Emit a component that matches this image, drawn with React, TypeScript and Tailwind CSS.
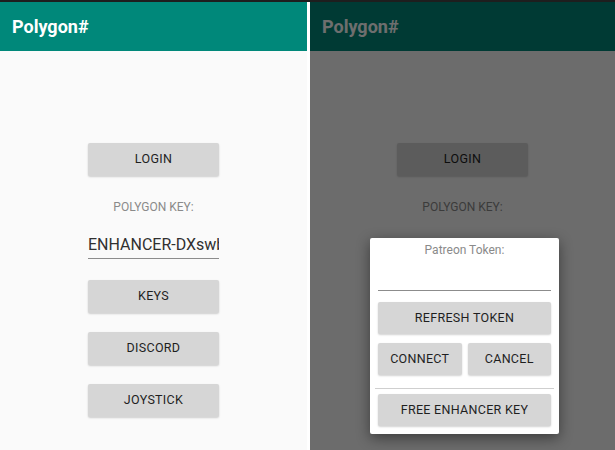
import React from "react";

const font = { fontFamily: "Roboto, 'Noto Sans', sans-serif" };

function Btn({ label, className = "" }: { label: string; className?: string }) {
  return (
    <div
      className={
        "flex items-center justify-center bg-[#d6d6d6] rounded-[2px] shadow-[0_1px_2px_rgba(0,0,0,0.18)] text-[12.5px] font-normal text-[#1f1f1f] tracking-[0.3px] " +
        className
      }
    >
      {label}
    </div>
  );
}

function Screen() {
  return (
    <div className="flex flex-col h-full w-full bg-[#fafafa]">
      <div className="h-[49px] bg-[#00887a] flex items-center pl-[12px] shrink-0">
        <span className="text-white text-[18px] font-bold leading-none">Polygon#</span>
      </div>
      <div className="flex flex-col items-center pt-[92px]">
        <Btn label="LOGIN" className="w-[131px] h-[33px]" />
        <div className="mt-[24px] text-[12px] leading-[14px] text-[#8a8a8a]">POLYGON KEY:</div>
        <div className="mt-[21px] w-[131px] h-[24px] overflow-hidden whitespace-nowrap border-b border-[#8c8c8c] text-[16px] leading-[19px] text-[#303030]">
          ENHANCER-DXswbQ7
        </div>
        <Btn label="KEYS" className="mt-[21px] w-[131px] h-[33px]" />
        <Btn label="DISCORD" className="mt-[19px] w-[131px] h-[33px]" />
        <Btn label="JOYSTICK" className="mt-[19px] w-[131px] h-[33px]" />
      </div>
    </div>
  );
}

export default function App() {
  return (
    <div className="w-[615px] h-[450px] flex flex-col overflow-hidden bg-white" style={font}>
      <div className="h-[2px] bg-[#1e1e1e] shrink-0" />
      <div className="flex flex-1 min-h-0">
        <div className="w-[307px] h-full">
          <Screen />
        </div>
        <div className="w-[3px] bg-white" />
        <div className="flex-1 h-full relative">
          <Screen />
          <div className="absolute inset-0 bg-black/[0.57]" />
          <div className="absolute left-[60px] top-[236px] w-[189px] h-[196px] bg-white rounded-[2px] shadow-[0_4px_14px_rgba(0,0,0,0.45)] flex flex-col px-[8px] pt-[5px]">
            <div className="text-center text-[12px] leading-[14px] text-[#8a8a8a]">Patreon Token:</div>
            <div className="mt-[33px] border-b border-[#8c8c8c]" />
            <Btn label="REFRESH TOKEN" className="mt-[11px] h-[32px] w-full" />
            <div className="mt-[9px] flex gap-[6px]">
              <Btn label="CONNECT" className="h-[32px] flex-1" />
              <Btn label="CANCEL" className="h-[32px] flex-1" />
            </div>
            <div className="mt-[13px] -mx-[3px] border-t border-[#cfcfcf]" />
            <Btn label="FREE ENHANCER KEY" className="mt-[5px] h-[32px] w-full" />
          </div>
        </div>
      </div>
    </div>
  );
}
